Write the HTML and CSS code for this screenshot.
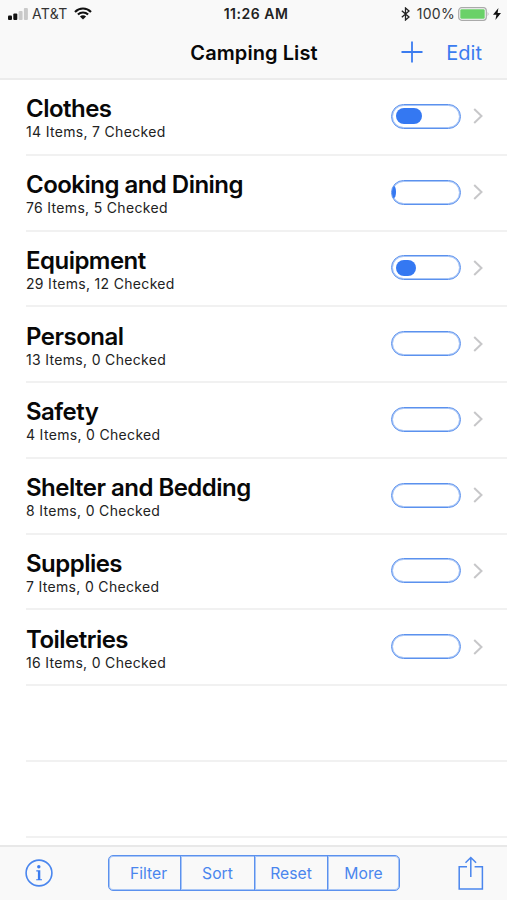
FILE: index.html
```html
<!DOCTYPE html>
<html lang="en">
<head>
<meta charset="utf-8">
<title>Camping List</title>
<link rel="stylesheet" href="styles.css">
</head>
<body>
<header class="top">
  <div class="status">
    <div class="status-left">
      <svg class="signal" width="20" height="12" viewBox="0 0 20 12"><rect x="0" y="7.5" width="4" height="4.5" rx="1"/><rect x="5.3" y="5.5" width="4" height="6.5" rx="1"/><rect class="weak" x="10.6" y="3" width="4" height="9" rx="1"/><rect class="weak" x="15.9" y="0" width="4" height="12" rx="1"/></svg>
      <span class="carrier">AT&amp;T</span>
      <svg class="wifi" width="18" height="13" viewBox="0 0 18 13"><path d="M1 5C5.5.4 12.500.4 17 5M3.900 7.600C6.800 4.800 11.200 4.800 14.100 7.600"/><path class="dot" d="M5.900 9.500Q9 7 12.100 9.500L9 12.600Z"/></svg>
    </div>
    <span class="time">11:26 AM</span>
    <div class="status-right">
      <svg class="bluetooth" width="9" height="14" viewBox="0 0 9 14"><path d="M.8 3.800 8 10 4.500 13V1L8 4 .8 10.200"/></svg>
      <span class="percent">100%</span>
      <svg class="battery" width="32" height="14" viewBox="0 0 32 14"><rect class="case" x=".7" y=".7" width="27.600" height="12.600" rx="3"/><rect class="charge" x="2.300" y="2.300" width="24.400" height="9.400" rx="1.200"/><path class="tip" d="M29.700 4.700Q31.500 7 29.700 9.300Z"/></svg>
      <svg class="bolt" width="8" height="12" viewBox="0 0 8 12"><path d="M5.400 0 0 6.800H3.400L2.400 12 8 5H4.600Z"/></svg>
    </div>
  </div>
  <nav class="nav">
    <h1 class="nav-title">Camping List</h1>
    <div class="nav-actions">
      <svg class="plus" width="22" height="22" viewBox="0 0 22 22"><path d="M11 .5V21.500M.5 11H21.500"/></svg>
      <span class="edit">Edit</span>
    </div>
  </nav>
</header>
<main class="list">
  <div class="row"><div class="label"><h2>Clothes</h2><p>14 Items, 7 Checked</p></div><div class="meter"><i class="half"></i></div><svg class="chevron" viewBox="0 0 10 16"><path d="M1.200 1 8.500 8 1.200 15"/></svg></div>
  <div class="row"><div class="label"><h2>Cooking and Dining</h2><p>76 Items, 5 Checked</p></div><div class="meter"><i class="sliver"></i></div><svg class="chevron" viewBox="0 0 10 16"><path d="M1.200 1 8.500 8 1.200 15"/></svg></div>
  <div class="row"><div class="label"><h2>Equipment</h2><p>29 Items, 12 Checked</p></div><div class="meter"><i class="third"></i></div><svg class="chevron" viewBox="0 0 10 16"><path d="M1.200 1 8.500 8 1.200 15"/></svg></div>
  <div class="row"><div class="label"><h2>Personal</h2><p>13 Items, 0 Checked</p></div><div class="meter"></div><svg class="chevron" viewBox="0 0 10 16"><path d="M1.200 1 8.500 8 1.200 15"/></svg></div>
  <div class="row"><div class="label"><h2>Safety</h2><p>4 Items, 0 Checked</p></div><div class="meter"></div><svg class="chevron" viewBox="0 0 10 16"><path d="M1.200 1 8.500 8 1.200 15"/></svg></div>
  <div class="row"><div class="label"><h2>Shelter and Bedding</h2><p>8 Items, 0 Checked</p></div><div class="meter"></div><svg class="chevron" viewBox="0 0 10 16"><path d="M1.200 1 8.500 8 1.200 15"/></svg></div>
  <div class="row"><div class="label"><h2>Supplies</h2><p>7 Items, 0 Checked</p></div><div class="meter"></div><svg class="chevron" viewBox="0 0 10 16"><path d="M1.200 1 8.500 8 1.200 15"/></svg></div>
  <div class="row"><div class="label"><h2>Toiletries</h2><p>16 Items, 0 Checked</p></div><div class="meter"></div><svg class="chevron" viewBox="0 0 10 16"><path d="M1.200 1 8.500 8 1.200 15"/></svg></div>
  <div class="row"></div>
  <div class="row"></div>
</main>
<footer class="toolbar">
  <svg class="info" width="28" height="28" viewBox="0 0 28 28"><circle class="ring" cx="14" cy="14" r="12.900"/><circle cx="13.800" cy="7.700" r="1.700"/><path d="M11.300 11.300H15.300V20.200H17V21.300H11.200V20.200H12.900V12.400H11.300Z"/></svg>
  <div class="segments"><span>Filter</span><span>Sort</span><span>Reset</span><span>More</span></div>
  <svg class="share" width="26" height="35" viewBox="0 0 26 35"><path d="M9 10.700H1.200V33H24.400V10.700H16.600M12.800 21V1.700M7.500 6.800 12.800 1.500 18.100 6.800"/></svg>
</footer>
</body>
</html>
```
FILE: styles.css
```css
* { box-sizing: border-box; }
body {
  margin: 0;
  width: 507px;
  height: 900px;
  overflow: hidden;
  display: flex;
  flex-direction: column;
  background: #fff;
  color: #080808;
  font-family: Inter, "Liberation Sans", sans-serif;
}
svg { display: block; flex: none; fill: none; }
h1, h2, p { margin: 0; white-space: nowrap; }

.top {
  height: 80px;
  flex: none;
  background: #f9f9f9;
  border-bottom: 2px solid #ececec;
}
.status {
  height: 27px;
  display: grid;
  grid-template-columns: 1fr auto 1fr;
  align-items: center;
  padding: 0 6px 0 8px;
  font-size: 14px;
  line-height: 18px;
}
.status-left, .status-right { display: flex; align-items: center; }
.status-right { justify-content: flex-end; }
.signal { fill: #111; }
.signal .weak { fill: #c9c9c9; }
.carrier { margin-left: 4px; color: #333; letter-spacing: 0.3px; }
.wifi { margin-left: 6px; stroke: #111; stroke-width: 2.1; }
.wifi .dot { fill: #111; stroke: none; }
.time { padding-left: 3px; font-weight: 600; color: #222; letter-spacing: 0.5px; }
.bluetooth { stroke: #222; stroke-width: 1.3; }
.percent { margin-left: 7px; color: #333; letter-spacing: 0.3px; }
.battery { margin-left: 3px; }
.battery .case { stroke: #aaa; stroke-width: 1.2; }
.battery .charge { fill: #6ad168; }
.battery .tip { fill: #aaa; }
.bolt { margin-left: 3px; fill: #111; }

.nav {
  height: 50px;
  display: grid;
  grid-template-columns: 1fr auto 1fr;
  align-items: center;
  padding: 0 25px;
}
.nav-title { grid-column: 2; padding: 1px 0 0 1px; font-size: 20px; line-height: 24px; font-weight: 600; letter-spacing: 0.08px; }
.nav-actions { display: flex; align-items: center; justify-content: flex-end; color: #3b7cf0; }
.plus { stroke: #3b7cf0; stroke-width: 1.8; }
.edit { margin-left: 23px; padding-top: 1px; font-size: 20px; line-height: 24px; }

.list { flex: 1; min-height: 0; overflow: hidden; padding-left: 26px; }
.row {
  height: 75.75px;
  display: flex;
  align-items: center;
  padding: 0 24px 1px 0;
  border-bottom: 2px solid #f1f1f1;
}
.label { flex: 1; padding-top: 4px; }
.label h2 { font-size: 24px; line-height: 27px; font-weight: 600; letter-spacing: -0.52px; }
.label p { font-size: 14px; line-height: 19px; color: #222; letter-spacing: 0.32px; }
.meter {
  width: 70px;
  height: 25px;
  flex: none;
  padding: 3.5px 4px;
  border: 1px solid #5b91ee;
  border-radius: 13px;
  box-shadow: inset 0 0 0 1px #a9c6f6;
  overflow: hidden;
}
.meter i { display: block; height: 16px; border-radius: 8px; background: #3478f2; }
.meter .half { width: 26px; }
.meter .third { width: 20px; }
.meter .sliver { width: 4px; height: 12px; margin: 2px 0 0 -4px; border-radius: 0 50% 50% 0; }
.chevron { width: 10px; height: 16px; margin-left: 12px; stroke: #c7c7c9; stroke-width: 2; }

.toolbar {
  height: 55px;
  flex: none;
  display: flex;
  align-items: center;
  padding: 0 23px 2px 25px;
  background: #f9f9f9;
  border-top: 2px solid #e8e8e8;
}
.info { fill: #3b7cf0; }
.info .ring { fill: none; stroke: #4a86ee; stroke-width: 1.6; }
.segments {
  width: 292px;
  height: 36px;
  margin-left: 55px;
  display: grid;
  grid-template-columns: 71px 74px 73px 1fr;
  border: 1px solid #5b91ee;
  border-radius: 5px;
  box-shadow: inset 0 0 0 1px #a9c6f6;
  color: #4a86ee;
  font-size: 15.700px;
}
.segments span { display: flex; align-items: center; justify-content: center; padding-top: 2px; }
.segments span + span { border-left: 1px solid #5b91ee; box-shadow: inset 1px 0 0 #a9c6f6; }
.segments span:first-child { padding-left: 8px; }
.share { margin: 2px 0 0 auto; stroke: #4a86ee; stroke-width: 1.5; }
```
